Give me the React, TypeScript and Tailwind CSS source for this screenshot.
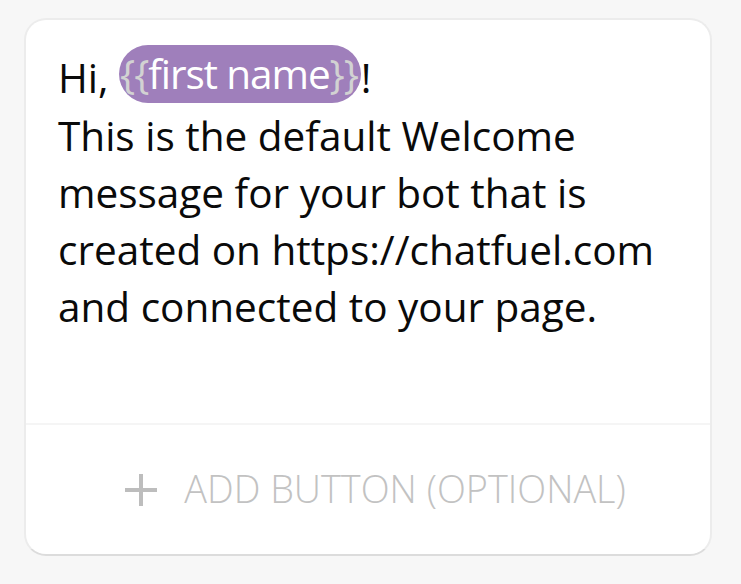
export default function App() {
  return (
    <div className="min-h-[584px] w-full bg-[#f7f7f7] pl-[24px] pr-[29px] pt-[18px] pb-[28px]">
      <div
        className="flex h-[538px] flex-col overflow-hidden rounded-[22px] border-2 border-[#ececec] border-b-[#dcdcdc] bg-white"
        style={{ fontFamily: '"Open Sans", "Noto Sans", sans-serif' }}
      >
        {/* message text */}
        <div className="flex-1 pl-[32px] pt-[29px] text-[40.5px] leading-[57px] text-[#0a0a0a]">
          <div className="whitespace-nowrap">
            Hi,{" "}
            <span className="relative -top-[4px] inline-block h-[58px] rounded-full bg-[#9f7fbb] pl-[1px] pr-[3px] leading-[58px] tracking-[-1.1px] text-white">
              <span className="text-[#d2d2d2]">{"{{"}</span>
              first name
              <span className="text-[#d2d2d2]">{"}}"}</span>
            </span>
            !
          </div>
          <div className="whitespace-nowrap">This is the default Welcome</div>
          <div className="whitespace-nowrap">message for your bot that is</div>
          <div className="whitespace-nowrap">created on https://chatfuel.com</div>
          <div className="whitespace-nowrap">and connected to your page.</div>
        </div>

        {/* add button */}
        <div className="flex h-[131px] items-center justify-center gap-[26px] border-t-2 border-[#f5f5f5] pl-[14px]">
          <svg viewBox="0 0 34 34" className="h-[34px] w-[34px]" shapeRendering="crispEdges">
            <path d="M17 1v32M1 17h32" stroke="#bdbdbd" strokeWidth="4" />
          </svg>
          <span className="text-[37.8px] font-light text-[#c2c2c2]">ADD BUTTON (OPTIONAL)</span>
        </div>
      </div>
    </div>
  );
}
